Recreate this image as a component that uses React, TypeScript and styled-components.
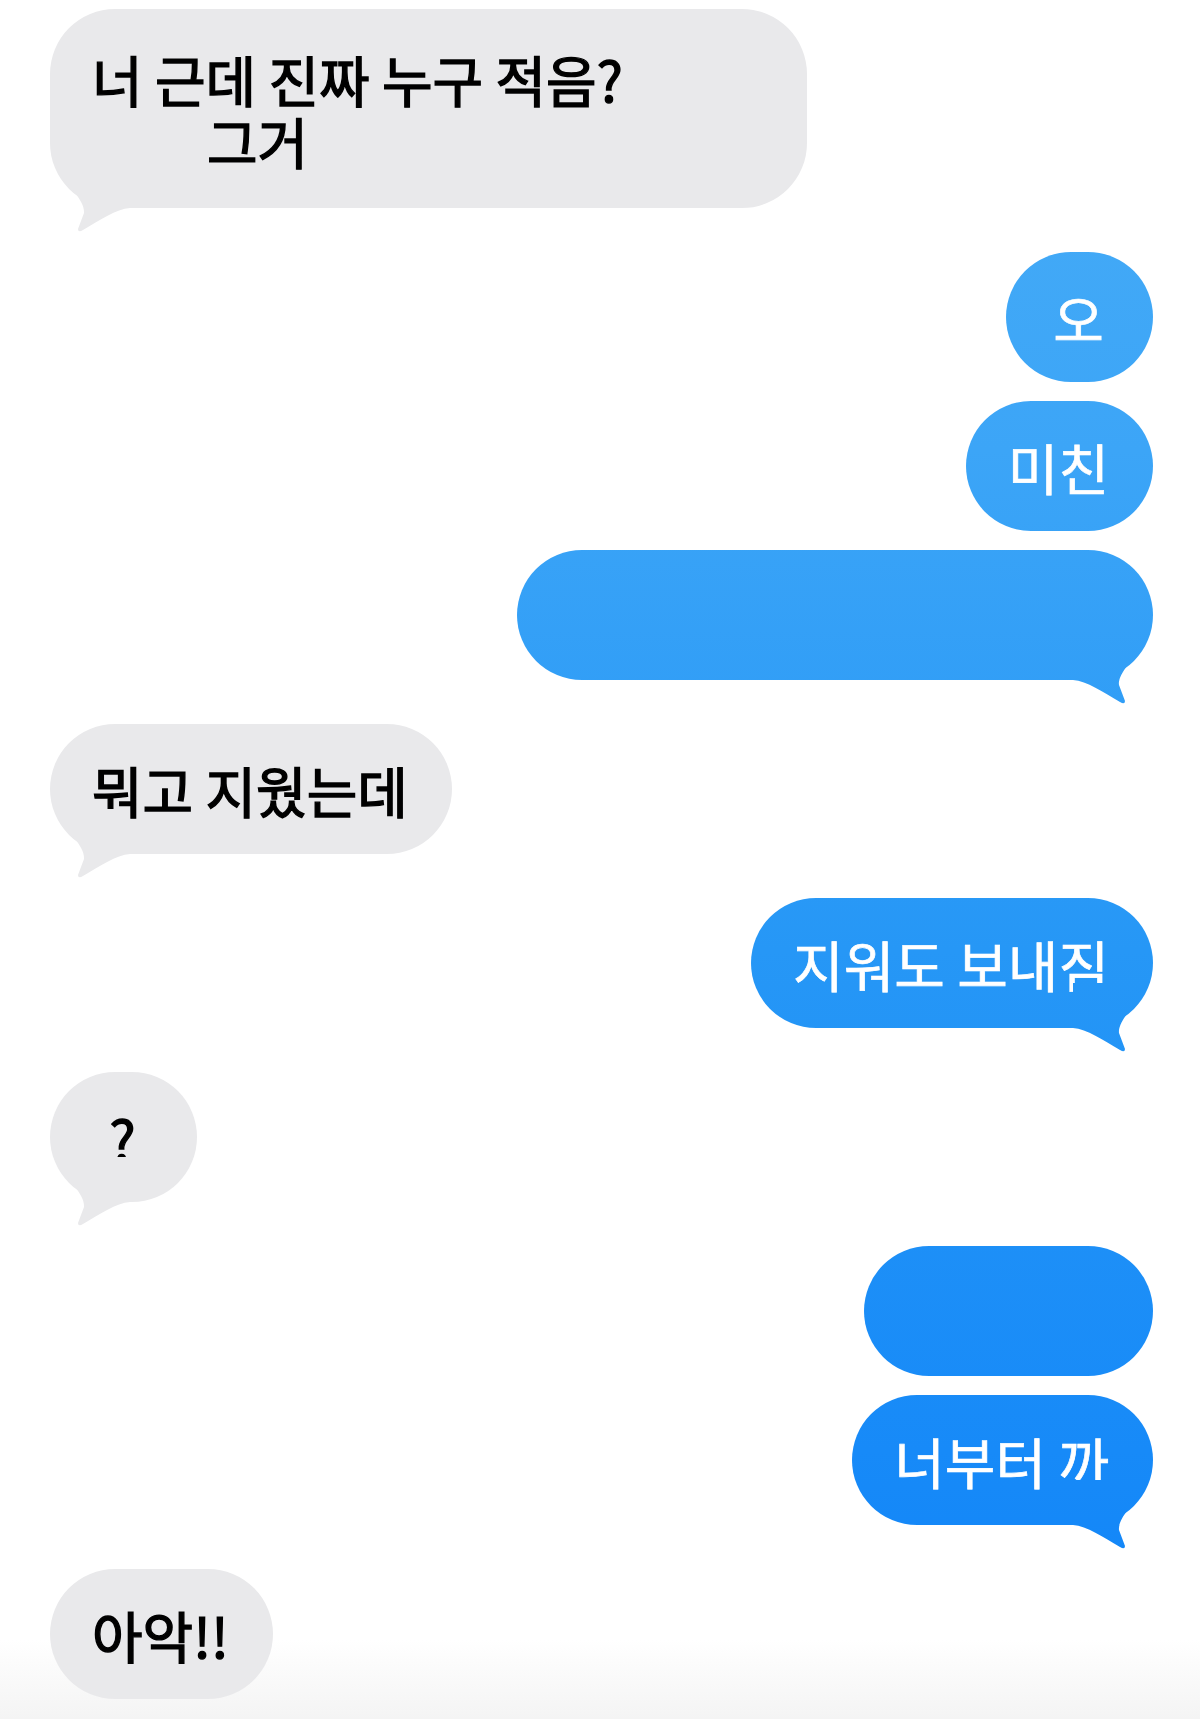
import React from "react";
import styled, { createGlobalStyle, css } from "styled-components";

const GlobalStyle = createGlobalStyle`
  html, body {
    margin: 0;
    padding: 0;
    background: #fff;
  }
  body {
    font-family: "Noto Sans CJK KR", "Noto Sans", sans-serif;
  }
`;

const BLUE =
  "linear-gradient(180deg, #48adf6 0px, #3ca5f7 450px, #2697f6 950px, #178af8 1450px, #0f83f8 1719px) fixed";
const GRAY = "#e9e9eb";

// tail shapes, drawn in an 80x70 box whose top sits 45px above the bubble bottom
const TAIL_RIGHT =
  "path('M 0 0 L 0 45 C 14 46, 30 57, 47 67 Q 52 70, 52 66 Q 49 58, 46 50 C 45 40, 56 28, 75 4 L 75 0 Z')";
const TAIL_LEFT =
  "path('M 80 0 L 80 45 C 66 46, 50 57, 33 67 Q 28 70, 28 66 Q 31 58, 34 50 C 35 40, 24 28, 5 4 L 5 0 Z')";

const Thread = styled.main`
  box-sizing: border-box;
  min-height: 1719px;
  padding: 9px 47px 0 50px;
  display: flex;
  flex-direction: column;
  background: linear-gradient(180deg, #fff 0px, #fff 1640px, #f4f4f4 1719px);
`;

const Row = styled.div<{ $mine: boolean; $tight: boolean }>`
  display: flex;
  justify-content: ${(p) => (p.$mine ? "flex-end" : "flex-start")};
  margin-top: ${(p) => (p.$tight ? 19 : 44)}px;

  &:first-child {
    margin-top: 0;
  }
`;

const Bubble = styled.div<{
  $mine: boolean;
  $tail: boolean;
  $width?: number;
  $height?: number;
}>`
  position: relative;
  box-sizing: border-box;
  min-width: 147px;
  min-height: ${(p) => p.$height ?? 130}px;
  width: ${(p) => (p.$width ? `${p.$width}px` : "auto")};
  padding: 34px 44px 34px 42px;
  border-radius: 65px;
  font-size: 55px;
  font-weight: 400;
  line-height: 62px;
  white-space: nowrap;
  display: flex;
  flex-direction: column;
  justify-content: center;
  align-items: ${(p) => (p.$width ? "flex-start" : "center")};
  background: ${(p) => (p.$mine ? BLUE : GRAY)};
  color: ${(p) => (p.$mine ? "#fff" : "#000")};
  -webkit-text-stroke: ${(p) => (p.$mine ? "0.7px #fff" : "1.4px #000")};

  &::after {
    content: "";
    display: ${(p) => (p.$tail ? "block" : "none")};
    position: absolute;
    bottom: -25px;
    width: 80px;
    height: 70px;
    background: inherit;
    ${(p) =>
      p.$mine
        ? css`
            right: 0;
            clip-path: ${TAIL_RIGHT};
          `
        : css`
            left: 0;
            clip-path: ${TAIL_LEFT};
          `}
  }
`;

const Line = styled.span<{ $indent: number }>`
  display: block;
  padding-left: ${(p) => p.$indent}px;
`;

interface Message {
  id: number;
  mine: boolean;
  tail: boolean;
  tight: boolean;
  width?: number;
  height?: number;
  lines: { text: string; indent?: number }[];
}

const messages: Message[] = [
  {
    id: 1,
    mine: false,
    tail: true,
    tight: false,
    width: 757,
    height: 199,
    lines: [{ text: "너 근데 진짜 누구 적음?" }, { text: "그거", indent: 115 }],
  },
  { id: 2, mine: true, tail: false, tight: false, lines: [{ text: "오" }] },
  { id: 3, mine: true, tail: false, tight: true, lines: [{ text: "미친" }] },
  { id: 4, mine: true, tail: true, tight: true, width: 636, lines: [{ text: "" }] },
  { id: 5, mine: false, tail: true, tight: false, lines: [{ text: "뭐고 지웠는데" }] },
  { id: 6, mine: true, tail: true, tight: false, lines: [{ text: "지워도 보내짐" }] },
  { id: 7, mine: false, tail: true, tight: false, lines: [{ text: "?" }] },
  { id: 8, mine: true, tail: false, tight: false, width: 289, lines: [{ text: "" }] },
  { id: 9, mine: true, tail: true, tight: true, lines: [{ text: "너부터 까" }] },
  { id: 10, mine: false, tail: false, tight: false, lines: [{ text: "아악!!" }] },
];

export default function App() {
  return (
    <>
      <GlobalStyle />
      <Thread>
        {messages.map((m) => (
          <Row key={m.id} $mine={m.mine} $tight={m.tight}>
            <Bubble $mine={m.mine} $tail={m.tail} $width={m.width} $height={m.height}>
              {m.lines.map((l, i) => (
                <Line key={i} $indent={l.indent ?? 0}>
                  {l.text}
                </Line>
              ))}
            </Bubble>
          </Row>
        ))}
      </Thread>
    </>
  );
}
